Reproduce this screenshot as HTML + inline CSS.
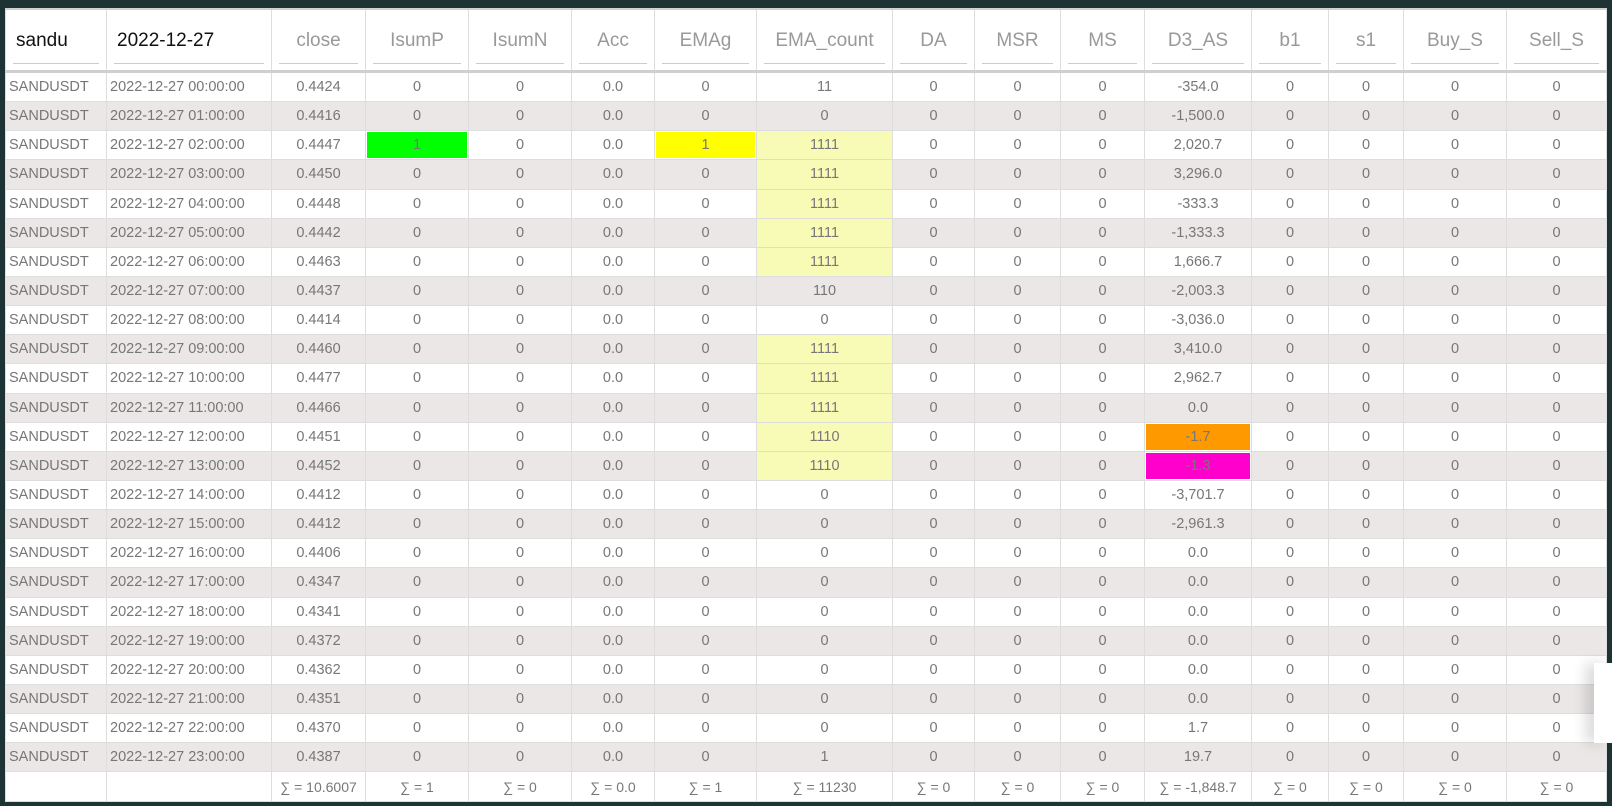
<!DOCTYPE html>
<html><head><meta charset="utf-8"><style>
html,body{margin:0;padding:0;width:1612px;height:806px;overflow:hidden;background:#1e3333;}
table{position:absolute;left:5px;top:8px;width:1601px;border-collapse:collapse;table-layout:fixed;background:#fff;font-family:"Liberation Sans",sans-serif;}
td,th{border:1px solid #ddd;padding:0;text-align:center;color:#777;font-size:14.5px;font-weight:normal;white-space:nowrap;overflow:hidden;}
tbody td{height:28.15px;}
tbody tr:nth-child(even) td{background:#ebe7e6;}
thead th{height:54px;border-top:2px solid #d0d0d0;border-bottom:3px solid #cfcfcf;color:#999;font-size:19px;position:relative;vertical-align:middle;padding-top:4px;padding-bottom:2px;}
thead th:after{content:"";position:absolute;left:7px;right:7px;bottom:6px;border-bottom:1px solid #ccc;}
thead th.l{color:#111;text-align:left;padding-left:10px;}
tbody td.a{text-align:left;padding-left:3px;}
tfoot td{height:29px;font-size:14px;}
tbody td.g{background:#00ff00 !important;box-shadow:inset 0 0 0 1px #fff;}
tbody td.y{background:#ffff00 !important;box-shadow:inset 0 0 0 1px #fff;}
tbody td.p{background:#f7fbb5 !important;}
tbody td.o{background:#ff9900 !important;box-shadow:inset 0 0 0 1px #fff;}
tbody td.m{background:#ff00cc !important;box-shadow:inset 0 0 0 1px #fff;}
.panel{position:absolute;left:1594px;top:663px;width:18px;height:80px;background:#fff;box-shadow:-8px 0 14px rgba(0,0,0,0.15);}
</style></head><body>
<table>
<colgroup><col style="width:101px"><col style="width:165px"><col style="width:94px"><col style="width:103px"><col style="width:103px"><col style="width:83px"><col style="width:102px"><col style="width:136px"><col style="width:82px"><col style="width:86px"><col style="width:84px"><col style="width:107px"><col style="width:77px"><col style="width:75px"><col style="width:103px"><col style="width:100px"></colgroup>
<thead><tr><th class="l">sandu</th><th class="l">2022-12-27</th><th>close</th><th>IsumP</th><th>IsumN</th><th>Acc</th><th>EMAg</th><th>EMA_count</th><th>DA</th><th>MSR</th><th>MS</th><th>D3_AS</th><th>b1</th><th>s1</th><th>Buy_S</th><th>Sell_S</th></tr></thead>
<tbody>
<tr><td class="a">SANDUSDT</td><td class="a">2022-12-27 00:00:00</td><td>0.4424</td><td>0</td><td>0</td><td>0.0</td><td>0</td><td>11</td><td>0</td><td>0</td><td>0</td><td>-354.0</td><td>0</td><td>0</td><td>0</td><td>0</td></tr>
<tr><td class="a">SANDUSDT</td><td class="a">2022-12-27 01:00:00</td><td>0.4416</td><td>0</td><td>0</td><td>0.0</td><td>0</td><td>0</td><td>0</td><td>0</td><td>0</td><td>-1,500.0</td><td>0</td><td>0</td><td>0</td><td>0</td></tr>
<tr><td class="a">SANDUSDT</td><td class="a">2022-12-27 02:00:00</td><td>0.4447</td><td class="g">1</td><td>0</td><td>0.0</td><td class="y">1</td><td class="p">1111</td><td>0</td><td>0</td><td>0</td><td>2,020.7</td><td>0</td><td>0</td><td>0</td><td>0</td></tr>
<tr><td class="a">SANDUSDT</td><td class="a">2022-12-27 03:00:00</td><td>0.4450</td><td>0</td><td>0</td><td>0.0</td><td>0</td><td class="p">1111</td><td>0</td><td>0</td><td>0</td><td>3,296.0</td><td>0</td><td>0</td><td>0</td><td>0</td></tr>
<tr><td class="a">SANDUSDT</td><td class="a">2022-12-27 04:00:00</td><td>0.4448</td><td>0</td><td>0</td><td>0.0</td><td>0</td><td class="p">1111</td><td>0</td><td>0</td><td>0</td><td>-333.3</td><td>0</td><td>0</td><td>0</td><td>0</td></tr>
<tr><td class="a">SANDUSDT</td><td class="a">2022-12-27 05:00:00</td><td>0.4442</td><td>0</td><td>0</td><td>0.0</td><td>0</td><td class="p">1111</td><td>0</td><td>0</td><td>0</td><td>-1,333.3</td><td>0</td><td>0</td><td>0</td><td>0</td></tr>
<tr><td class="a">SANDUSDT</td><td class="a">2022-12-27 06:00:00</td><td>0.4463</td><td>0</td><td>0</td><td>0.0</td><td>0</td><td class="p">1111</td><td>0</td><td>0</td><td>0</td><td>1,666.7</td><td>0</td><td>0</td><td>0</td><td>0</td></tr>
<tr><td class="a">SANDUSDT</td><td class="a">2022-12-27 07:00:00</td><td>0.4437</td><td>0</td><td>0</td><td>0.0</td><td>0</td><td>110</td><td>0</td><td>0</td><td>0</td><td>-2,003.3</td><td>0</td><td>0</td><td>0</td><td>0</td></tr>
<tr><td class="a">SANDUSDT</td><td class="a">2022-12-27 08:00:00</td><td>0.4414</td><td>0</td><td>0</td><td>0.0</td><td>0</td><td>0</td><td>0</td><td>0</td><td>0</td><td>-3,036.0</td><td>0</td><td>0</td><td>0</td><td>0</td></tr>
<tr><td class="a">SANDUSDT</td><td class="a">2022-12-27 09:00:00</td><td>0.4460</td><td>0</td><td>0</td><td>0.0</td><td>0</td><td class="p">1111</td><td>0</td><td>0</td><td>0</td><td>3,410.0</td><td>0</td><td>0</td><td>0</td><td>0</td></tr>
<tr><td class="a">SANDUSDT</td><td class="a">2022-12-27 10:00:00</td><td>0.4477</td><td>0</td><td>0</td><td>0.0</td><td>0</td><td class="p">1111</td><td>0</td><td>0</td><td>0</td><td>2,962.7</td><td>0</td><td>0</td><td>0</td><td>0</td></tr>
<tr><td class="a">SANDUSDT</td><td class="a">2022-12-27 11:00:00</td><td>0.4466</td><td>0</td><td>0</td><td>0.0</td><td>0</td><td class="p">1111</td><td>0</td><td>0</td><td>0</td><td>0.0</td><td>0</td><td>0</td><td>0</td><td>0</td></tr>
<tr><td class="a">SANDUSDT</td><td class="a">2022-12-27 12:00:00</td><td>0.4451</td><td>0</td><td>0</td><td>0.0</td><td>0</td><td class="p">1110</td><td>0</td><td>0</td><td>0</td><td class="o">-1.7</td><td>0</td><td>0</td><td>0</td><td>0</td></tr>
<tr><td class="a">SANDUSDT</td><td class="a">2022-12-27 13:00:00</td><td>0.4452</td><td>0</td><td>0</td><td>0.0</td><td>0</td><td class="p">1110</td><td>0</td><td>0</td><td>0</td><td class="m">-1.3</td><td>0</td><td>0</td><td>0</td><td>0</td></tr>
<tr><td class="a">SANDUSDT</td><td class="a">2022-12-27 14:00:00</td><td>0.4412</td><td>0</td><td>0</td><td>0.0</td><td>0</td><td>0</td><td>0</td><td>0</td><td>0</td><td>-3,701.7</td><td>0</td><td>0</td><td>0</td><td>0</td></tr>
<tr><td class="a">SANDUSDT</td><td class="a">2022-12-27 15:00:00</td><td>0.4412</td><td>0</td><td>0</td><td>0.0</td><td>0</td><td>0</td><td>0</td><td>0</td><td>0</td><td>-2,961.3</td><td>0</td><td>0</td><td>0</td><td>0</td></tr>
<tr><td class="a">SANDUSDT</td><td class="a">2022-12-27 16:00:00</td><td>0.4406</td><td>0</td><td>0</td><td>0.0</td><td>0</td><td>0</td><td>0</td><td>0</td><td>0</td><td>0.0</td><td>0</td><td>0</td><td>0</td><td>0</td></tr>
<tr><td class="a">SANDUSDT</td><td class="a">2022-12-27 17:00:00</td><td>0.4347</td><td>0</td><td>0</td><td>0.0</td><td>0</td><td>0</td><td>0</td><td>0</td><td>0</td><td>0.0</td><td>0</td><td>0</td><td>0</td><td>0</td></tr>
<tr><td class="a">SANDUSDT</td><td class="a">2022-12-27 18:00:00</td><td>0.4341</td><td>0</td><td>0</td><td>0.0</td><td>0</td><td>0</td><td>0</td><td>0</td><td>0</td><td>0.0</td><td>0</td><td>0</td><td>0</td><td>0</td></tr>
<tr><td class="a">SANDUSDT</td><td class="a">2022-12-27 19:00:00</td><td>0.4372</td><td>0</td><td>0</td><td>0.0</td><td>0</td><td>0</td><td>0</td><td>0</td><td>0</td><td>0.0</td><td>0</td><td>0</td><td>0</td><td>0</td></tr>
<tr><td class="a">SANDUSDT</td><td class="a">2022-12-27 20:00:00</td><td>0.4362</td><td>0</td><td>0</td><td>0.0</td><td>0</td><td>0</td><td>0</td><td>0</td><td>0</td><td>0.0</td><td>0</td><td>0</td><td>0</td><td>0</td></tr>
<tr><td class="a">SANDUSDT</td><td class="a">2022-12-27 21:00:00</td><td>0.4351</td><td>0</td><td>0</td><td>0.0</td><td>0</td><td>0</td><td>0</td><td>0</td><td>0</td><td>0.0</td><td>0</td><td>0</td><td>0</td><td>0</td></tr>
<tr><td class="a">SANDUSDT</td><td class="a">2022-12-27 22:00:00</td><td>0.4370</td><td>0</td><td>0</td><td>0.0</td><td>0</td><td>0</td><td>0</td><td>0</td><td>0</td><td>1.7</td><td>0</td><td>0</td><td>0</td><td>0</td></tr>
<tr><td class="a">SANDUSDT</td><td class="a">2022-12-27 23:00:00</td><td>0.4387</td><td>0</td><td>0</td><td>0.0</td><td>0</td><td>1</td><td>0</td><td>0</td><td>0</td><td>19.7</td><td>0</td><td>0</td><td>0</td><td>0</td></tr>
</tbody>
<tfoot><tr><td></td><td></td><td>∑ = 10.6007</td><td>∑ = 1</td><td>∑ = 0</td><td>∑ = 0.0</td><td>∑ = 1</td><td>∑ = 11230</td><td>∑ = 0</td><td>∑ = 0</td><td>∑ = 0</td><td>∑ = -1,848.7</td><td>∑ = 0</td><td>∑ = 0</td><td>∑ = 0</td><td>∑ = 0</td></tr></tfoot>
</table>
<div class="panel"></div>
</body></html>
